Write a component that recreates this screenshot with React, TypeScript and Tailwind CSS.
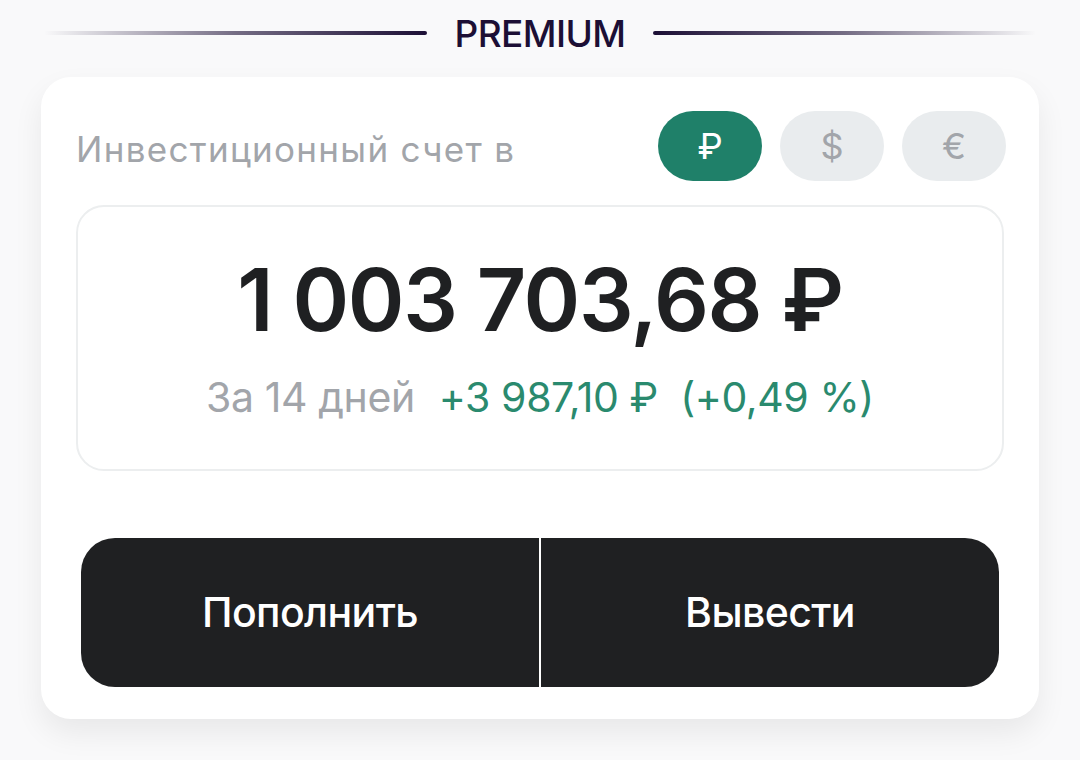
import React from "react";

export default function App() {
  return (
    <div className="w-[1080px] h-[760px] bg-[#f9f9fa] overflow-hidden" style={{ fontFamily: "Inter, 'Noto Sans', sans-serif" }}>
      <div className="flex items-center h-[66px] px-[44px] gap-[28px]">
        <div className="flex-1 h-[4px] rounded-full bg-gradient-to-l from-[#1c0f35] via-[#1c0f35]/60 to-transparent" />
        <div className="text-[37px] font-medium text-[#1c0f35] tracking-[-0.6px] leading-none pt-[1px]">PREMIUM</div>
        <div className="flex-1 h-[4px] rounded-full bg-gradient-to-r from-[#1c0f35] via-[#1c0f35]/60 to-transparent" />
      </div>
      <div className="mx-[41px] mt-[11px] h-[642px] bg-white rounded-[30px] shadow-[0_14px_30px_rgba(0,0,0,0.07)] pl-[35px] pr-[33px] pt-[34px]">
        <div className="flex items-center justify-between h-[70px]">
          <div className="text-[35px] text-[#a2a5aa] tracking-[1.3px] pt-[6px]">Инвестиционный счет в</div>
          <div className="flex gap-[18px]">
            <div className="w-[104px] h-[70px] rounded-full bg-[#1f8069] text-white flex items-center justify-center text-[36px]">₽</div>
            <div className="w-[104px] h-[70px] rounded-full bg-[#e9ecee] text-[#a2a5aa] flex items-center justify-center text-[36px]">$</div>
            <div className="w-[104px] h-[70px] rounded-full bg-[#e9ecee] text-[#a2a5aa] flex items-center justify-center text-[36px]">€</div>
          </div>
        </div>
        <div className="mt-[24px] mr-[2px] h-[266px] border-2 border-[#eceeef] rounded-[28px] flex flex-col items-center pt-[50px]">
          <div className="text-[86px] font-semibold text-[#1f2022] leading-none tracking-[-1.4px]">1 003 703,68 ₽</div>
          <div className="mt-[34px] text-[41px] leading-none tracking-[-0.4px] flex gap-[24px]">
            <span className="text-[#a2a5aa]">За 14 дней</span>
            <span className="text-[#2a8a6e]">+3 987,10 ₽&nbsp;&nbsp;(+0,49 %)</span>
          </div>
        </div>
        <div className="mt-[67px] ml-[5px] mr-[7px] h-[149px] flex gap-[2px]">
          <button className="flex-1 bg-[#1f2022] rounded-l-[34px] text-white text-[41px] font-medium tracking-[-0.6px]">Пополнить</button>
          <button className="flex-1 bg-[#1f2022] rounded-r-[34px] text-white text-[41px] font-medium tracking-[-0.6px]">Вывести</button>
        </div>
      </div>
    </div>
  );
}
